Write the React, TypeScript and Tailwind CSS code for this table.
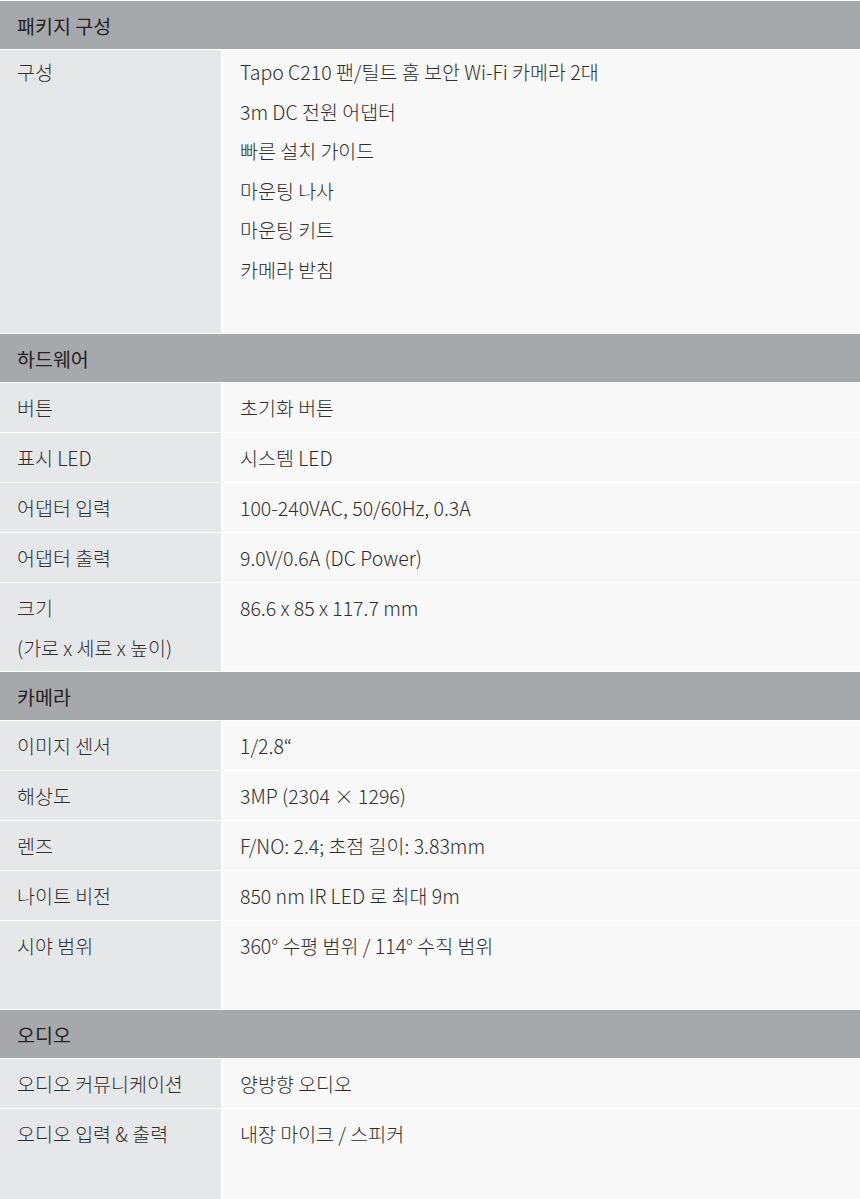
type Row = {
  label: string[];
  value: string[];
  height: string;
  pad: string;
};

type Section = {
  title: string;
  rows: Row[];
};

const sections: Section[] = [
  {
    title: "패키지 구성",
    rows: [
      {
        label: ["구성"],
        value: [
          "Tapo C210 팬/틸트 홈 보안 Wi-Fi 카메라 2대",
          "3m DC 전원 어댑터",
          "빠른 설치 가이드",
          "마운팅 나사",
          "마운팅 키트",
          "카메라 받침",
        ],
        height: "h-[283px]",
        pad: "pt-[2px]",
      },
    ],
  },
  {
    title: "하드웨어",
    rows: [
      { label: ["버튼"], value: ["초기화 버튼"], height: "h-[49px]", pad: "pt-[5px]" },
      { label: ["표시 LED"], value: ["시스템 LED"], height: "h-[49px]", pad: "pt-[5px]" },
      { label: ["어댑터 입력"], value: ["100-240VAC, 50/60Hz, 0.3A"], height: "h-[49px]", pad: "pt-[5px]" },
      { label: ["어댑터 출력"], value: ["9.0V/0.6A (DC Power)"], height: "h-[49px]", pad: "pt-[5px]" },
      {
        label: ["크기", "(가로 x 세로 x 높이)"],
        value: ["86.6 x 85 x 117.7 mm"],
        height: "h-[88px]",
        pad: "pt-[5px]",
      },
    ],
  },
  {
    title: "카메라",
    rows: [
      { label: ["이미지 센서"], value: ["1/2.8“"], height: "h-[49px]", pad: "pt-[5px]" },
      { label: ["해상도"], value: ["3MP (2304 × 1296)"], height: "h-[49px]", pad: "pt-[5px]" },
      { label: ["렌즈"], value: ["F/NO: 2.4; 초점 길이: 3.83mm"], height: "h-[49px]", pad: "pt-[5px]" },
      { label: ["나이트 비전"], value: ["850 nm IR LED 로 최대 9m"], height: "h-[49px]", pad: "pt-[5px]" },
      {
        label: ["시야 범위"],
        value: ["360° 수평 범위 / 114° 수직 범위"],
        height: "h-[88px]",
        pad: "pt-[5px]",
      },
    ],
  },
  {
    title: "오디오",
    rows: [
      { label: ["오디오 커뮤니케이션"], value: ["양방향 오디오"], height: "h-[49px]", pad: "pt-[5px]" },
      {
        label: ["오디오 입력 & 출력"],
        value: ["내장 마이크 / 스피커"],
        height: "h-[90px]",
        pad: "pt-[5px]",
      },
    ],
  },
];

const SpecRow = ({ row }: { row: Row }) => {
  return (
    <div className={`flex gap-[2px] ${row.height}`}>
      <div className={`w-[221px] shrink-0 bg-[#e6e7e8] pl-[17px] ${row.pad}`}>
        {row.label.map((line) => (
          <p key={line}>{line}</p>
        ))}
      </div>
      <div className={`flex-1 bg-[#f8f8f8] pl-[17px] ${row.pad}`}>
        {row.value.map((line) => (
          <p key={line}>{line}</p>
        ))}
      </div>
    </div>
  );
};

const App = () => {
  return (
    <div
      className="w-[860px] bg-white pt-px flex flex-col gap-px text-[19.5px] font-light leading-[39.5px] text-[#2e2e2e]"
      style={{ fontFamily: '"Noto Sans CJK KR", "Noto Sans", sans-serif' }}
    >
      {sections.map((section) => (
        <div key={section.title} className="flex flex-col gap-px">
          <div className="h-[48px] bg-[#a7a8ab] pl-[17px] pt-[1px] flex items-center font-normal text-[#222222]">
            {section.title}
          </div>
          {section.rows.map((row) => (
            <SpecRow key={row.label[0]} row={row} />
          ))}
        </div>
      ))}
    </div>
  );
};

export default App;
